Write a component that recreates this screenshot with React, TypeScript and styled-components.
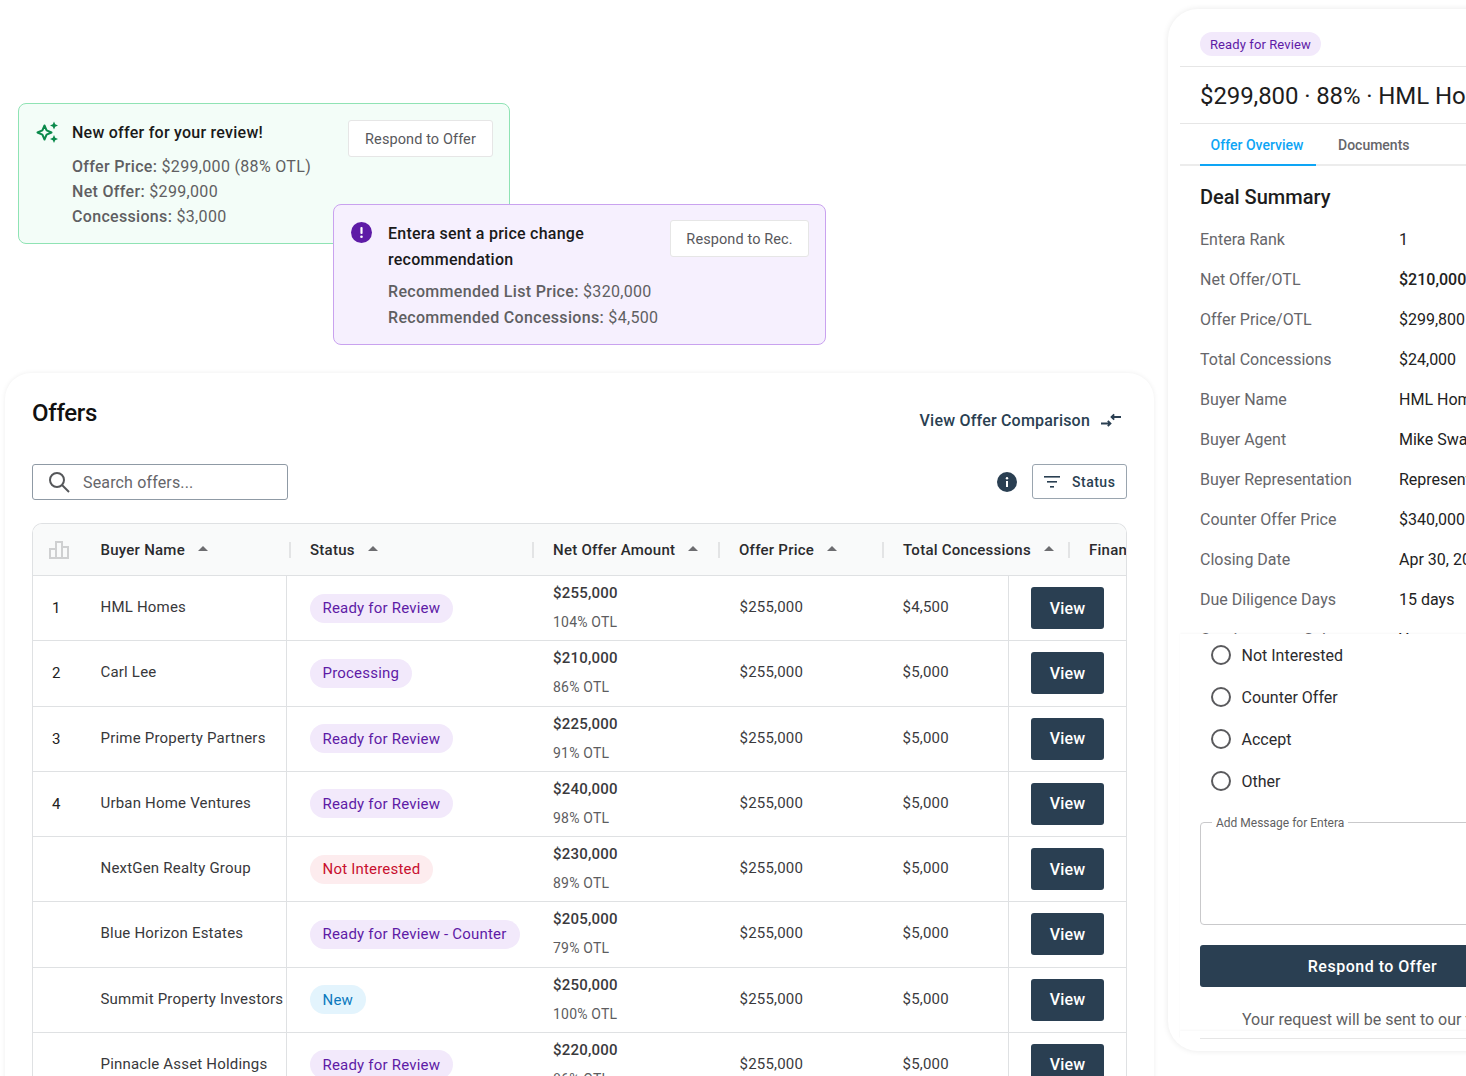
import styled, { createGlobalStyle } from "styled-components";

const GlobalStyle = createGlobalStyle`
  html, body { margin: 0; padding: 0; background: #fff; }
  body { font-family: Roboto, "Liberation Sans", sans-serif; color: #1c1c1c; }
  * { box-sizing: border-box; }
`;

type Status = "review" | "processing" | "rejected" | "new";

type Offer = {
  rank?: number;
  buyer: string;
  status: string;
  kind: Status;
  net: string;
  otl: string;
  price: string;
  concessions: string;
};

const offers: Offer[] = [
  { rank: 1, buyer: "HML Homes", status: "Ready for Review", kind: "review", net: "$255,000", otl: "104% OTL", price: "$255,000", concessions: "$4,500" },
  { rank: 2, buyer: "Carl Lee", status: "Processing", kind: "processing", net: "$210,000", otl: "86% OTL", price: "$255,000", concessions: "$5,000" },
  { rank: 3, buyer: "Prime Property Partners", status: "Ready for Review", kind: "review", net: "$225,000", otl: "91% OTL", price: "$255,000", concessions: "$5,000" },
  { rank: 4, buyer: "Urban Home Ventures", status: "Ready for Review", kind: "review", net: "$240,000", otl: "98% OTL", price: "$255,000", concessions: "$5,000" },
  { buyer: "NextGen Realty Group", status: "Not Interested", kind: "rejected", net: "$230,000", otl: "89% OTL", price: "$255,000", concessions: "$5,000" },
  { buyer: "Blue Horizon Estates", status: "Ready for Review - Counter", kind: "review", net: "$205,000", otl: "79% OTL", price: "$255,000", concessions: "$5,000" },
  { buyer: "Summit Property Investors", status: "New", kind: "new", net: "$250,000", otl: "100% OTL", price: "$255,000", concessions: "$5,000" },
  { buyer: "Pinnacle Asset Holdings", status: "Ready for Review", kind: "review", net: "$220,000", otl: "86% OTL", price: "$255,000", concessions: "$5,000" },
];

const summary: [string, string, boolean?][] = [
  ["Entera Rank", "1"],
  ["Net Offer/OTL", "$210,000 · 75%", true],
  ["Offer Price/OTL", "$299,800 · 88%"],
  ["Total Concessions", "$24,000"],
  ["Buyer Name", "HML Homes"],
  ["Buyer Agent", "Mike Swanson"],
  ["Buyer Representation", "Represented"],
  ["Counter Offer Price", "$340,000"],
  ["Closing Date", "Apr 30, 2025"],
  ["Due Diligence Days", "15 days"],
  ["Contingent on Sale", "Yes"],
];

const pillColors: Record<Status, { bg: string; fg: string }> = {
  review: { bg: "#f2e9fb", fg: "#5e1ba6" },
  processing: { bg: "#f2e9fb", fg: "#5e1ba6" },
  rejected: { bg: "#fdecee", fg: "#c8102e" },
  new: { bg: "#e3f4fd", fg: "#0b79bd" },
};

const Page = styled.div`
  width: 1466px;
  height: 1076px;
  overflow: hidden;
  display: flex;
  align-items: flex-start;
`;

const LeftColumn = styled.div`
  width: 1168px;
  flex: none;
  padding: 103px 0 0 5px;
`;

const AlertStack = styled.div`
  position: relative;
  height: 270px;
  padding-left: 13px;
`;

const Alert = styled.div<{ $tone: "green" | "purple" }>`
  height: 141px;
  border-radius: 8px;
  display: flex;
  border: 1px solid ${(p) => (p.$tone === "green" ? "#8fe3b4" : "#c9a2ef")};
  background: ${(p) => (p.$tone === "green" ? "#f3fdf8" : "#f6f0fe")};
`;

const GreenAlert = styled(Alert)`
  width: 492px;
  padding: 16px 16px 0 16px;
`;

const PurpleAlert = styled(Alert)`
  position: absolute;
  left: 328px;
  top: 101px;
  width: 493px;
  padding: 15px 16px 0 17px;
`;

const AlertIcon = styled.div<{ $width: number; $top: number }>`
  width: ${(p) => p.$width}px;
  padding-top: ${(p) => p.$top}px;
  flex: none;
`;

const AlertBody = styled.div<{ $top: number }>`
  flex: 1;
  min-width: 0;
  padding-top: ${(p) => p.$top}px;
`;

const AlertTitle = styled.div`
  font-size: 16px;
  line-height: 26px;
  font-weight: 500;
  letter-spacing: 0.25px;
  color: #1a1a1a;
`;

const AlertLine = styled.div<{ $height: number }>`
  font-size: 16px;
  line-height: ${(p) => p.$height}px;
  letter-spacing: 0.32px;
  color: #5f5f62;
  span { font-weight: 500; }
`;

const AlertLines = styled.div<{ $gap: number }>`
  margin-top: ${(p) => p.$gap}px;
`;

const AlertButton = styled.button<{ $width: number }>`
  width: ${(p) => p.$width}px;
  height: 37px;
  flex: none;
  padding: 1px 0 0;
  background: #fff;
  border: 1px solid #e6e6e6;
  border-radius: 3px;
  font: 400 14.5px Roboto, sans-serif;
  letter-spacing: 0.1px;
  color: #58585c;
`;

const OffersCard = styled.section`
  width: 1149px;
  height: 760px;
  border-radius: 26px;
  background: #fff;
  box-shadow: 0 0 5px rgba(0, 0, 0, 0.07);
  padding: 0 27px;
`;

const OffersHead = styled.div`
  display: flex;
  justify-content: space-between;
  height: 91px;
`;

const OffersTitle = styled.h1`
  margin: 24px 0 0;
  font-size: 24px;
  line-height: 32px;
  font-weight: 500;
  letter-spacing: -0.3px;
  color: #111;
`;

const CompareLink = styled.a`
  margin: 36px 5px 0 0;
  display: flex;
  align-items: center;
  gap: 10px;
  height: 22px;
  font-size: 16px;
  font-weight: 500;
  letter-spacing: 0.2px;
  color: #2a3f52;
`;

const Toolbar = styled.div`
  display: flex;
  align-items: flex-start;
  justify-content: space-between;
  height: 36px;
  margin-bottom: 23px;
`;

const SearchBox = styled.div`
  width: 256px;
  height: 36px;
  border: 1px solid #8f9aa5;
  border-radius: 3px;
  display: flex;
  align-items: center;
  gap: 13px;
  padding-left: 15px;
  font-size: 16px;
  letter-spacing: 0.15px;
  color: #66666a;
`;

const ToolbarRight = styled.div`
  display: flex;
  align-items: center;
  gap: 15px;
`;

const FilterButton = styled.button`
  width: 95px;
  height: 35px;
  display: flex;
  align-items: center;
  gap: 12px;
  padding: 0 0 0 11px;
  background: #fff;
  border: 1px solid #9aa5af;
  border-radius: 3px;
  font: 500 14px Roboto, sans-serif;
  letter-spacing: 0.5px;
  color: #2a3f52;
`;

const Table = styled.div`
  width: 1095px;
  border: 1px solid #dfe1e3;
  border-bottom: 0;
  border-radius: 10px 10px 0 0;
  overflow: hidden;
`;

const HeaderRow = styled.div`
  display: grid;
  grid-template-columns: 67.5px 190.5px 243px 186px 164px 186px 58px;
  height: 52px;
  align-items: center;
  background: #f9fafa;
  border-bottom: 1px solid #dfe1e3;
  white-space: nowrap;
`;

const HeaderCell = styled.div<{ $pad?: number; $rule?: boolean }>`
  height: 16px;
  display: flex;
  align-items: center;
  gap: 13px;
  padding-left: ${(p) => p.$pad ?? 0}px;
  font-size: 15px;
  font-weight: 500;
  letter-spacing: 0.25px;
  color: #2b2b2e;
  border-right: ${(p) => (p.$rule ? "2px solid #e3e4e5" : "0")};
  overflow: hidden;
`;

const RankHead = styled.div`
  padding-left: 16px;
  display: flex;
`;

const SortCaret = styled.i`
  width: 0;
  height: 0;
  border-left: 5px solid transparent;
  border-right: 5px solid transparent;
  border-bottom: 5px solid #6d6d70;
  margin-top: -2px;
`;

const Row = styled.div`
  display: grid;
  grid-template-columns: 67.5px 186.5px 266px 186.5px 163px 105.5px 119px;
  height: 65.25px;
  align-items: center;
  border-bottom: 1px solid #dfe1e3;
  white-space: nowrap;
  font-size: 15px;
  letter-spacing: 0.2px;
  color: #3a3a3d;
`;

const RankCell = styled.div`
  padding-left: 19px;
  color: #222;
`;

const BuyerCell = styled.div`
  height: 100%;
  display: flex;
  align-items: center;
  padding-bottom: 2px;
  border-right: 1px solid #dfe1e3;
  font-weight: 400;
  color: #38383b;
`;

const StatusCell = styled.div`
  padding-left: 22.5px;
`;

const Pill = styled.span<{ $kind: Status; $small?: boolean }>`
  display: inline-flex;
  align-items: center;
  height: ${(p) => (p.$small ? 24 : 29)}px;
  padding: 0 ${(p) => (p.$small ? 10 : 13)}px;
  border-radius: 15px;
  font-size: ${(p) => (p.$small ? 13 : 15)}px;
  letter-spacing: ${(p) => (p.$small ? 0.1 : 0.2)}px;
  background: ${(p) => pillColors[p.$kind].bg};
  color: ${(p) => pillColors[p.$kind].fg};
`;

const NetCell = styled.div`
  display: flex;
  flex-direction: column;
  gap: 11px;
  line-height: 18px;
  margin-bottom: 1px;
  font-weight: 500;
`;

const OtlNote = styled.span`
  font-size: 14px;
  font-weight: 400;
  color: #5d5d60;
`;

const AmountCell = styled.div`
  padding-bottom: 2px;
`;

const ActionCell = styled.div`
  height: 100%;
  display: flex;
  align-items: center;
  padding-left: 22px;
  border-left: 1px solid #dfe1e3;
`;

const ViewButton = styled.button`
  width: 73px;
  height: 42px;
  border: 0;
  border-radius: 3px;
  background: #2a3f52;
  color: #fff;
  font: 500 16px Roboto, sans-serif;
  letter-spacing: 0.1px;
`;

const DetailPanel = styled.aside`
  width: 400px;
  height: 1042px;
  margin-top: 9px;
  flex: none;
  border-radius: 30px;
  background: #fff;
  box-shadow: 0 0 6px rgba(0, 0, 0, 0.09);
  padding-left: 12px;
  overflow: hidden;
`;

const PanelHead = styled.div`
  height: 58px;
  padding: 23px 0 0 20px;
  border-bottom: 1px solid #e6e6e6;
`;

const OfferHeading = styled.div`
  height: 57px;
  padding: 1px 0 0 20px;
  display: flex;
  align-items: center;
  border-bottom: 1px solid #e6e6e6;
  font-size: 24px;
  letter-spacing: -0.1px;
  white-space: nowrap;
  color: #1d1d1d;
`;

const Tabs = styled.div`
  height: 42px;
  padding-left: 20px;
  display: flex;
  border-bottom: 2px solid #ececec;
`;

const Tab = styled.div<{ $active?: boolean }>`
  width: ${(p) => (p.$active ? "116px" : "auto")};
  height: 42px;
  margin-right: 22px;
  padding-right: ${(p) => (p.$active ? 2 : 0)}px;
  text-align: center;
  line-height: 43px;
  font-size: 14px;
  font-weight: 500;
  color: ${(p) => (p.$active ? "#0ea5f5" : "#66666a")};
  border-bottom: ${(p) => (p.$active ? "2px solid #0ea5f5" : "0")};
`;

const SummaryArea = styled.div`
  height: 468px;
  padding-left: 20px;
  overflow: hidden;
`;

const SummaryTitle = styled.h2`
  margin: 17px 0 8px;
  font-size: 20px;
  line-height: 28px;
  font-weight: 500;
  color: #1d1d1d;
`;

const SummaryRow = styled.div`
  display: grid;
  grid-template-columns: 199px 1fr;
  height: 40px;
  align-items: center;
  font-size: 16px;
  white-space: nowrap;
`;

const SummaryLabel = styled.span`
  color: #66666a;
`;

const SummaryValue = styled.span<{ $strong?: boolean }>`
  color: #222;
  font-weight: ${(p) => (p.$strong ? 500 : 400)};
`;

const ResponseArea = styled.div`
  padding: 0 0 0 20px;
  box-shadow: 0 -1px 2px rgba(0, 0, 0, 0.03);
`;

const RadioGroup = styled.div`
  display: flex;
  flex-direction: column;
  padding-left: 11px;
`;

const RadioRow = styled.label`
  height: 42px;
  display: flex;
  align-items: center;
  gap: 10.5px;
  font-size: 16px;
  color: #2b2b2e;
`;

const RadioMark = styled.span`
  width: 20px;
  height: 20px;
  border: 2px solid #5a5a5d;
  border-radius: 50%;
`;

const MessageField = styled.fieldset`
  margin: 12px 0 20px;
  width: 345px;
  height: 111px;
  padding: 0 0 0 11px;
  border: 1px solid #c9c9cb;
  border-radius: 4px;
`;

const MessageLegend = styled.legend`
  padding: 2px 4px 0;
  font-size: 12px;
  line-height: 14px;
  color: #5f5f62;
`;

const RespondButton = styled.button`
  display: block;
  width: 345px;
  height: 42px;
  border: 0;
  border-radius: 3px;
  background: #2a3f52;
  color: #fff;
  font: 500 16px Roboto, sans-serif;
  letter-spacing: 0.5px;
`;

const FootNote = styled.div`
  height: 36px;
  margin-top: 8px;
  padding: 15px 0 0 42px;
  font-size: 16px;
  line-height: 20px;
  white-space: nowrap;
  color: #5f5f62;
`;

const FootFade = styled.div`
  height: 8px;
  margin-left: -20px;
  padding-left: 20px;
  box-shadow: 0 -1px 2px rgba(0, 0, 0, 0.03);
`;

const FootRule = styled.div`
  height: 8px;
  border-bottom: 1px solid #e6e6e6;
`;

const Sparkle = () => (
  <svg width="26" height="24" viewBox="0 0 26 24" fill="none">
    <path d="M9.5 5.5 L11.6 10.4 L16.5 12.5 L11.6 14.6 L9.5 19.5 L7.4 14.6 L2.5 12.5 L7.4 10.4 Z" stroke="#0a8a4b" strokeWidth="2" strokeLinejoin="round" />
    <path d="M19 1.5 L20.2 4.3 L23 5.5 L20.2 6.7 L19 9.5 L17.8 6.7 L15 5.5 L17.8 4.3 Z" fill="#0a8a4b" />
    <path d="M19 15 L20.2 17.8 L23 19 L20.2 20.2 L19 23 L17.8 20.2 L15 19 L17.8 17.8 Z" fill="#0a8a4b" />
  </svg>
);

const AlertMark = () => (
  <svg width="21" height="21" viewBox="0 0 21 21">
    <circle cx="10.5" cy="10.5" r="10.5" fill="#5e1ba6" />
    <rect x="9.4" y="5" width="2.2" height="7" rx="1" fill="#fff" />
    <circle cx="10.5" cy="14.8" r="1.3" fill="#fff" />
  </svg>
);

const CompareIcon = () => (
  <svg width="22" height="14" viewBox="0 0 22 14" fill="none" stroke="#2a3f52" strokeWidth="1.8">
    <path d="M1 10.5 H10.5 M7.8 7.8 L10.5 10.5 L7.8 13.2" />
    <path d="M21 4 H11.5 M14.2 1.3 L11.5 4 L14.2 6.7" />
  </svg>
);

const SearchIcon = () => (
  <svg width="22" height="22" viewBox="0 0 22 22" fill="none" stroke="#55575a" strokeWidth="2">
    <circle cx="9" cy="9" r="7" />
    <path d="M14 14 L21 21" />
  </svg>
);

const InfoIcon = () => (
  <svg width="20" height="20" viewBox="0 0 20 20">
    <circle cx="10" cy="10" r="10" fill="#2a3f52" />
    <rect x="9" y="9" width="2" height="6" fill="#fff" />
    <circle cx="10" cy="6.3" r="1.2" fill="#fff" />
  </svg>
);

const FilterIcon = () => (
  <svg width="16" height="12" viewBox="0 0 16 12" fill="#2a3f52">
    <rect x="0" y="0" width="16" height="1.6" />
    <rect x="3" y="5" width="10" height="1.6" />
    <rect x="6" y="10" width="4" height="1.6" />
  </svg>
);

const RankIcon = () => (
  <svg width="20" height="18" viewBox="0 0 20 18" fill="none" stroke="#cfd0d1" strokeWidth="2">
    <path d="M1 17 V8 H7 V17 Z M7 17 V1 H13 V17 Z M13 17 V6 H19 V17 Z" />
  </svg>
);

const columns = [
  { label: "Buyer Name", rule: true },
  { label: "Status", pad: 19, rule: true },
  { label: "Net Offer Amount", pad: 19, rule: true },
  { label: "Offer Price", pad: 19, rule: true },
  { label: "Total Concessions", pad: 19, rule: true },
  { label: "Finan", pad: 19, caret: false },
];

export default function App() {
  return (
    <Page>
      <GlobalStyle />
      <LeftColumn>
        <AlertStack>
          <GreenAlert $tone="green">
            <AlertIcon $width={37} $top={0}>
              <Sparkle />
            </AlertIcon>
            <AlertBody $top={0}>
              <AlertTitle>New offer for your review!</AlertTitle>
              <AlertLines $gap={8}>
                <AlertLine $height={25}><span>Offer Price:</span> $299,000 (88% OTL)</AlertLine>
                <AlertLine $height={25}><span>Net Offer:</span> $299,000</AlertLine>
                <AlertLine $height={25}><span>Concessions:</span> $3,000</AlertLine>
              </AlertLines>
            </AlertBody>
            <AlertButton $width={145}>Respond to Offer</AlertButton>
          </GreenAlert>
          <PurpleAlert $tone="purple">
            <AlertIcon $width={37} $top={2}>
              <AlertMark />
            </AlertIcon>
            <AlertBody $top={1}>
              <AlertTitle>Entera sent a price change recommendation</AlertTitle>
              <AlertLines $gap={6}>
                <AlertLine $height={26}><span>Recommended List Price:</span> $320,000</AlertLine>
                <AlertLine $height={26}><span>Recommended Concessions:</span> $4,500</AlertLine>
              </AlertLines>
            </AlertBody>
            <AlertButton $width={139}>Respond to Rec.</AlertButton>
          </PurpleAlert>
        </AlertStack>

        <OffersCard>
          <OffersHead>
            <OffersTitle>Offers</OffersTitle>
            <CompareLink>
              View Offer Comparison
              <CompareIcon />
            </CompareLink>
          </OffersHead>
          <Toolbar>
            <SearchBox>
              <SearchIcon />
              Search offers...
            </SearchBox>
            <ToolbarRight>
              <InfoIcon />
              <FilterButton>
                <FilterIcon />
                Status
              </FilterButton>
            </ToolbarRight>
          </Toolbar>
          <Table>
            <HeaderRow>
              <RankHead>
                <RankIcon />
              </RankHead>
              {columns.map((c) => (
                <HeaderCell key={c.label} $pad={c.pad} $rule={c.rule}>
                  {c.label}
                  {c.caret !== false && <SortCaret />}
                </HeaderCell>
              ))}
            </HeaderRow>
            {offers.map((o) => (
              <Row key={o.buyer}>
                <RankCell>{o.rank}</RankCell>
                <BuyerCell>{o.buyer}</BuyerCell>
                <StatusCell>
                  <Pill $kind={o.kind}>{o.status}</Pill>
                </StatusCell>
                <NetCell>
                  {o.net}
                  <OtlNote>{o.otl}</OtlNote>
                </NetCell>
                <AmountCell>{o.price}</AmountCell>
                <AmountCell>{o.concessions}</AmountCell>
                <ActionCell>
                  <ViewButton>View</ViewButton>
                </ActionCell>
              </Row>
            ))}
          </Table>
        </OffersCard>
      </LeftColumn>

      <DetailPanel>
        <PanelHead>
          <Pill $kind="review" $small>Ready for Review</Pill>
        </PanelHead>
        <OfferHeading>$299,800 · 88% · HML Homes</OfferHeading>
        <Tabs>
          <Tab $active>Offer Overview</Tab>
          <Tab>Documents</Tab>
        </Tabs>
        <SummaryArea>
          <SummaryTitle>Deal Summary</SummaryTitle>
          {summary.map(([label, value, strong]) => (
            <SummaryRow key={label}>
              <SummaryLabel>{label}</SummaryLabel>
              <SummaryValue $strong={strong}>{value}</SummaryValue>
            </SummaryRow>
          ))}
        </SummaryArea>
        <ResponseArea>
          <RadioGroup>
            {["Not Interested", "Counter Offer", "Accept", "Other"].map((r) => (
              <RadioRow key={r}>
                <RadioMark />
                {r}
              </RadioRow>
            ))}
          </RadioGroup>
          <MessageField>
            <MessageLegend>Add Message for Entera</MessageLegend>
          </MessageField>
          <RespondButton>Respond to Offer</RespondButton>
          <FootNote>Your request will be sent to our team for review</FootNote>
          <FootFade>
            <FootRule />
          </FootFade>
        </ResponseArea>
      </DetailPanel>
    </Page>
  );
}
